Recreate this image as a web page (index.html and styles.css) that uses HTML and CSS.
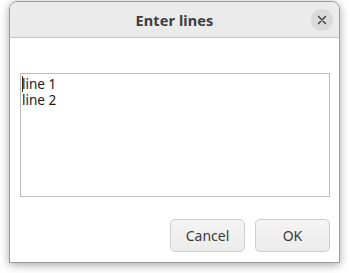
FILE: index.html
```html
<!DOCTYPE html>
<html>
<head>
<meta charset="utf-8">
<link rel="stylesheet" href="styles.css">
</head>
<body>
<div class="window">
  <div class="header">
    <div class="title">Enter lines</div>
    <div class="close">
      <svg width="10" height="10" viewBox="0 0 10 10"><path d="M1.5 1.5 L8.5 8.5 M8.5 1.5 L1.5 8.5" stroke="#3a3a3a" stroke-width="1.4" stroke-linecap="round"/></svg>
    </div>
  </div>
  <div class="content">
    <div class="textarea"><div class="line"><span class="caret"></span>line 1</div><div class="line">line 2</div></div>
    <div class="buttons">
      <div class="btn">Cancel</div>
      <div class="btn">OK</div>
    </div>
  </div>
</div>
</body>
</html>
```
FILE: styles.css
```css
html, body {
  margin: 0;
  padding: 0;
  background: #ffffff;
  width: 350px;
  height: 273px;
  overflow: hidden;
}
body {
  font-family: "Noto Sans", "DejaVu Sans", sans-serif;
}
.window {
  margin: 1px 0 0 9px;
  width: 329px;
  height: 260px;
  border: 1px solid #9a9a9a;
  border-radius: 8px 8px 0 0;
  background: #ffffff;
  box-shadow: 0 2px 10px rgba(0, 0, 0, 0.35);
  display: flex;
  flex-direction: column;
  overflow: hidden;
}
.header {
  height: 35px;
  background: #ebebeb;
  border-bottom: 1px solid #c6c6c6;
  display: flex;
  align-items: center;
  justify-content: center;
  position: relative;
  flex: none;
}
.title {
  font-weight: bold;
  font-size: 14.5px;
  color: #3d3d3d;
  letter-spacing: 0.1px;
}
.close {
  position: absolute;
  right: 6px;
  top: 7px;
  width: 22px;
  height: 22px;
  border-radius: 50%;
  background: #dadada;
  display: flex;
  align-items: center;
  justify-content: center;
}
.content {
  flex: 1;
  display: flex;
  flex-direction: column;
  padding: 35px 9px 10px 10px;
}
.textarea {
  height: 120px;
  border: 1px solid #bdbdbd;
  padding: 2px 0 0 1px;
  font-size: 13.5px;
  line-height: 16px;
  color: #1a1a1a;
}
.line {
  display: flex;
  align-items: center;
}
.caret {
  width: 1px;
  height: 16px;
  background: #5a2a10;
  margin-right: -1px;
}
.buttons {
  margin-top: auto;
  display: flex;
  justify-content: flex-end;
  gap: 10px;
}
.btn {
  width: 73px;
  height: 31px;
  border: 1px solid #cdcdcd;
  border-radius: 5px;
  background: linear-gradient(#f4f4f4, #ececec);
  display: flex;
  align-items: center;
  justify-content: center;
  font-size: 14px;
  color: #3a3a3a;
}
```
